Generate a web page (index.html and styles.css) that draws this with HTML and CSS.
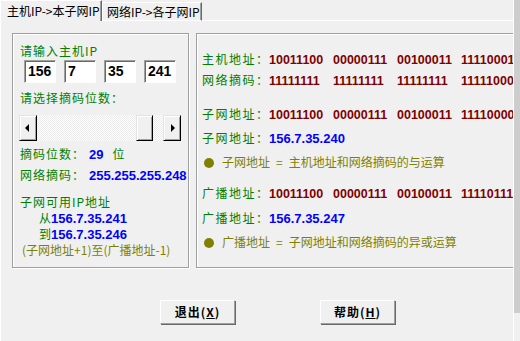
FILE: index.html
```html
<!DOCTYPE html>
<html lang="zh-CN">
<head>
<meta charset="utf-8">
<title>子网计算</title>
<link rel="stylesheet" href="styles.css">
</head>
<body>
<div class="screen">
  <div class="dialog">
    <div class="tabs">
      <div class="tab active">主机IP-&gt;本子网IP</div>
      <div class="tab">网络IP-&gt;各子网IP</div>
      <div class="tab-fill"></div>
    </div>
    <div class="page">
      <div class="groups">
        <div class="group left">
          <div class="lrow g l-title">请输入主机IP</div>
          <div class="ip-row">
            <div class="ip-box">156</div>
            <div class="ip-box">7</div>
            <div class="ip-box">35</div>
            <div class="ip-box">241</div>
          </div>
          <div class="lrow g l-title2">请选择摘码位数：</div>
          <div class="scroll">
            <div class="sbtn"><span class="arr-l"></span></div>
            <div class="track"><div class="thumb"></div></div>
            <div class="sbtn"><span class="arr-r"></span></div>
          </div>
          <div class="lrow l-bits"><span class="g lab">摘码位数：</span><span class="val">29</span><span class="g unit">位</span></div>
          <div class="lrow l-mask"><span class="g lab">网络摘码：</span><span class="val">255.255.255.248</span></div>
          <div class="lrow g l-sub">子网可用IP地址</div>
          <div class="lrow l-from"><span class="g">从</span><span class="val">156.7.35.241</span></div>
          <div class="lrow l-to"><span class="g">到</span><span class="val">156.7.35.246</span></div>
          <div class="lrow o l-note">(子网地址+1)至(广播地址-1)</div>
        </div>
        <div class="group right">
          <div class="rrow r1"><span class="g rlab">主机地址：</span><span class="bin">10011100</span><span class="bin">00000111</span><span class="bin">00100011</span><span class="bin">11110001</span></div>
          <div class="rrow r2"><span class="g rlab">网络摘码：</span><span class="bin">11111111</span><span class="bin">11111111</span><span class="bin">11111111</span><span class="bin">11111000</span></div>
          <div class="rrow r3"><span class="g rlab">子网地址：</span><span class="bin">10011100</span><span class="bin">00000111</span><span class="bin">00100011</span><span class="bin">11110000</span></div>
          <div class="rrow r4"><span class="g rlab">子网地址：</span><span class="val">156.7.35.240</span></div>
          <div class="rrow r5 o"><span class="dot"></span>子网地址<span class="eq">=</span>主机地址和网络摘码的与运算</div>
          <div class="rrow r6"><span class="g rlab">广播地址：</span><span class="bin">10011100</span><span class="bin">00000111</span><span class="bin">00100011</span><span class="bin">11110111</span></div>
          <div class="rrow r7"><span class="g rlab">广播地址：</span><span class="val">156.7.35.247</span></div>
          <div class="rrow r8 o"><span class="dot"></span>广播地址<span class="eq">=</span>子网地址和网络摘码的异或运算</div>
        </div>
      </div>
      <div class="buttons">
        <div class="btn">退出(<u>X</u>)</div>
        <div class="btn">帮助(<u>H</u>)</div>
      </div>
    </div>
  </div>
  <div class="edge"><div class="edge-bar"></div></div>
</div>
</body>
</html>
```

FILE: styles.css
```css
html, body {
  margin: 0;
  padding: 0;
  background: #f0f0f0;
  overflow: hidden;
}
body {
  font-family: "Noto Sans CJK SC", "Liberation Sans", sans-serif;
  font-size: 12px;
  color: #000;
}
.screen {
  display: flex;
  width: 520px;
  height: 341px;
}
.dialog {
  width: 513px;
  height: 341px;
  overflow: hidden;
  display: flex;
  flex-direction: column;
}
.edge {
  width: 7px;
  border-left: 1px solid #fff;
  box-sizing: border-box;
}
.edge-bar {
  height: 313px;
  background: #cdcdcd;
}

/* tabs */
.tabs {
  display: flex;
  height: 21px;
  flex: none;
}
.tab {
  box-sizing: border-box;
  white-space: nowrap;
}
.tab.active {
  width: 102px;
  height: 21px;
  border-top: 1px solid #fff;
  border-left: 1px solid #fff;
  border-right: 1px solid #696969;
  box-shadow: inset -1px 0 0 #a0a0a0;
  padding-left: 6px;
  line-height: 19px;
}
.tab:not(.active) {
  width: 100px;
  height: 19px;
  margin-top: 2px;
  border-top: 1px solid #fff;
  border-left: 1px solid #fff;
  border-right: 1px solid #696969;
  border-bottom: 1px solid #fff;
  box-shadow: inset -1px 0 0 #a0a0a0;
  padding-left: 4px;
  line-height: 17px;
}
.tab-fill {
  flex: 1;
  border-bottom: 1px solid #fff;
}

/* page */
.page {
  flex: 1;
  border-left: 1px solid #fff;
  display: flex;
  flex-direction: column;
}
.groups {
  display: flex;
  margin-top: 12px;
  padding-left: 11px;
  gap: 7px;
}
.group {
  box-sizing: border-box;
  height: 235px;
  border: 1px solid #a0a0a0;
  box-shadow: 1px 1px 0 #fff, inset 1px 1px 0 #fff;
  flex: none;
}
.group.left {
  width: 177px;
  padding: 9px 0 0 7px;
}
.group.right {
  width: 345px;
  padding: 15px 0 0 5px;
  white-space: nowrap;
}

.g { color: #008000; }
.o { color: #808000; }
.val {
  color: #0000ff;
  font-family: "Liberation Sans", sans-serif;
  font-weight: bold;
  font-size: 13px;
}

/* left group */
.lrow {
  line-height: 16px;
  height: 16px;
  white-space: nowrap;
}
.l-title, .l-title2, .l-sub, .lab { letter-spacing: 1px; }
.ip-row {
  display: flex;
  gap: 8px;
  margin-top: 1px;
  margin-left: 4px;
}
.ip-box {
  box-sizing: border-box;
  width: 32px;
  height: 23px;
  background: #fff;
  border: 1px solid;
  border-color: #a0a0a0 #fff #fff #a0a0a0;
  box-shadow: inset 1px 1px 0 #696969;
  padding-left: 3px;
  font-family: "Liberation Sans", sans-serif;
  font-weight: bold;
  font-size: 14px;
  line-height: 21px;
}
.l-title2 { margin-top: 7px; }
.scroll {
  display: flex;
  width: 162px;
  height: 26px;
  margin-top: 9px;
  margin-left: -1px;
}
.sbtn {
  box-sizing: border-box;
  width: 18px;
  height: 26px;
  background: #f0f0f0;
  border: 1px solid;
  border-color: #e3e3e3 #000 #000 #e3e3e3;
  box-shadow: inset 1px 1px 0 #fff, inset -1px -1px 0 #a0a0a0;
  display: flex;
  align-items: center;
  justify-content: center;
}
.arr-l, .arr-r {
  width: 0;
  height: 0;
  border-top: 4px solid transparent;
  border-bottom: 4px solid transparent;
}
.arr-l { border-right: 4px solid #000; margin-right: 2px; }
.arr-r { border-left: 4px solid #000; margin-left: 2px; }
.track {
  flex: 1;
  background: repeating-conic-gradient(#fff 0 25%, #ebebeb 0 50%) 0 0 / 2px 2px;
  padding-left: 99px;
}
.thumb {
  box-sizing: border-box;
  width: 17px;
  height: 26px;
  background: #f0f0f0;
  border: 1px solid;
  border-color: #e3e3e3 #000 #000 #e3e3e3;
  box-shadow: inset 1px 1px 0 #fff, inset -1px -1px 0 #a0a0a0;
}
.l-bits { margin-top: 5px; }
.l-mask { margin-top: 5px; }
.lab {
  display: inline-block;
  width: 69px;
}
.unit { margin-left: 9px; }
.l-sub { margin-top: 11px; }
.l-from { padding-left: 19px; }
.l-to { padding-left: 19px; }
.l-note { padding-left: 2px; }

/* right group */
.rrow {
  height: 20px;
  line-height: 20px;
}
.rlab {
  display: inline-block;
  width: 67px;
  letter-spacing: 1.5px;
}
.bin {
  display: inline-block;
  width: 64px;
  color: #800000;
  font-family: "Liberation Sans", sans-serif;
  font-weight: bold;
  font-size: 12.5px;
}
.r2 { margin-top: 1px; }
.r3 { margin-top: 14px; }
.r4 { margin-top: 4px; }
.r5 { margin-top: 4px; }
.r6 { margin-top: 11px; }
.r7 { margin-top: 5px; }
.r8 { margin-top: 4px; }
.eq {
  margin: 0 6px;
}
.dot {
  display: inline-block;
  width: 10px;
  height: 10px;
  border-radius: 50%;
  background: #808000;
  margin: 0 8px 0 2px;
  vertical-align: -1px;
}

/* buttons */
.buttons {
  display: flex;
  gap: 85px;
  margin-top: 32px;
  padding-left: 159px;
}
.btn {
  box-sizing: border-box;
  width: 75px;
  height: 24px;
  background: #f0f0f0;
  border: 1px solid;
  border-color: #fff #a0a0a0 #a0a0a0 #fff;
  box-shadow: 1px 1px 0 #696969;
  font-weight: bold;
  letter-spacing: 1px;
  text-align: center;
  line-height: 22px;
}
```
